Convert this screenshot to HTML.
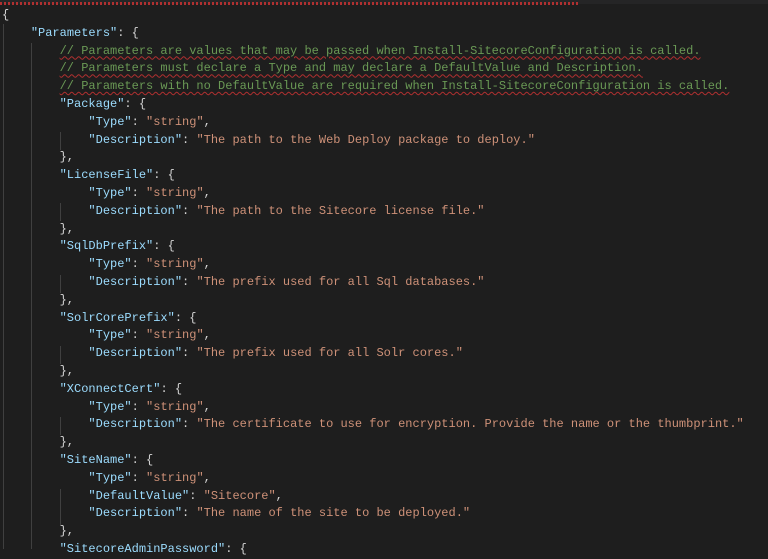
<!DOCTYPE html>
<html><head><style>
html,body{margin:0;padding:0;background:#1e1e1e;width:768px;height:549px;overflow:hidden}
.top{position:absolute;left:0;top:0;width:768px;height:4px;background:#252526}
.sq{position:absolute;left:0;top:2px;width:580px;height:3px;background:repeating-linear-gradient(90deg,#b03030 0 2px,transparent 2px 4px)}
pre{position:absolute;left:2px;top:7px;margin:0;font-family:"Liberation Mono",monospace;font-size:12px;line-height:17.8px;color:#d4d4d4}
.k{color:#9cdcfe}.s{color:#ce9178}.c{color:#6a9955;text-decoration:underline wavy #b03030;text-decoration-thickness:1px;text-underline-offset:2px}
.g{position:absolute;width:1px;background:#404040}
</style></head><body>
<div class="top"></div><div class="sq"></div>
<div class="g" style="left:3px;top:24px;height:525px"></div>
<div class="g" style="left:31px;top:43px;height:506px"></div>
<div class="g" style="left:60px;top:132px;height:18px"></div>
<div class="g" style="left:60px;top:203px;height:18px"></div>
<div class="g" style="left:60px;top:275px;height:18px"></div>
<div class="g" style="left:60px;top:346px;height:18px"></div>
<div class="g" style="left:60px;top:417px;height:18px"></div>
<div class="g" style="left:60px;top:489px;height:36px"></div>
<pre>{
    <span class="k">"Parameters"</span>: {
        <span class="c">// Parameters are values that may be passed when Install-SitecoreConfiguration is called.</span>
        <span class="c">// Parameters must declare a Type and may declare a DefaultValue and Description.</span>
        <span class="c">// Parameters with no DefaultValue are required when Install-SitecoreConfiguration is called.</span>
        <span class="k">"Package"</span>: {
            <span class="k">"Type"</span>: <span class="s">"string"</span>,
            <span class="k">"Description"</span>: <span class="s">"The path to the Web Deploy package to deploy."</span>
        },
        <span class="k">"LicenseFile"</span>: {
            <span class="k">"Type"</span>: <span class="s">"string"</span>,
            <span class="k">"Description"</span>: <span class="s">"The path to the Sitecore license file."</span>
        },
        <span class="k">"SqlDbPrefix"</span>: {
            <span class="k">"Type"</span>: <span class="s">"string"</span>,
            <span class="k">"Description"</span>: <span class="s">"The prefix used for all Sql databases."</span>
        },
        <span class="k">"SolrCorePrefix"</span>: {
            <span class="k">"Type"</span>: <span class="s">"string"</span>,
            <span class="k">"Description"</span>: <span class="s">"The prefix used for all Solr cores."</span>
        },
        <span class="k">"XConnectCert"</span>: {
            <span class="k">"Type"</span>: <span class="s">"string"</span>,
            <span class="k">"Description"</span>: <span class="s">"The certificate to use for encryption. Provide the name or the thumbprint."</span>
        },
        <span class="k">"SiteName"</span>: {
            <span class="k">"Type"</span>: <span class="s">"string"</span>,
            <span class="k">"DefaultValue"</span>: <span class="s">"Sitecore"</span>,
            <span class="k">"Description"</span>: <span class="s">"The name of the site to be deployed."</span>
        },
        <span class="k">"SitecoreAdminPassword"</span>: {
</pre>
</body></html>
